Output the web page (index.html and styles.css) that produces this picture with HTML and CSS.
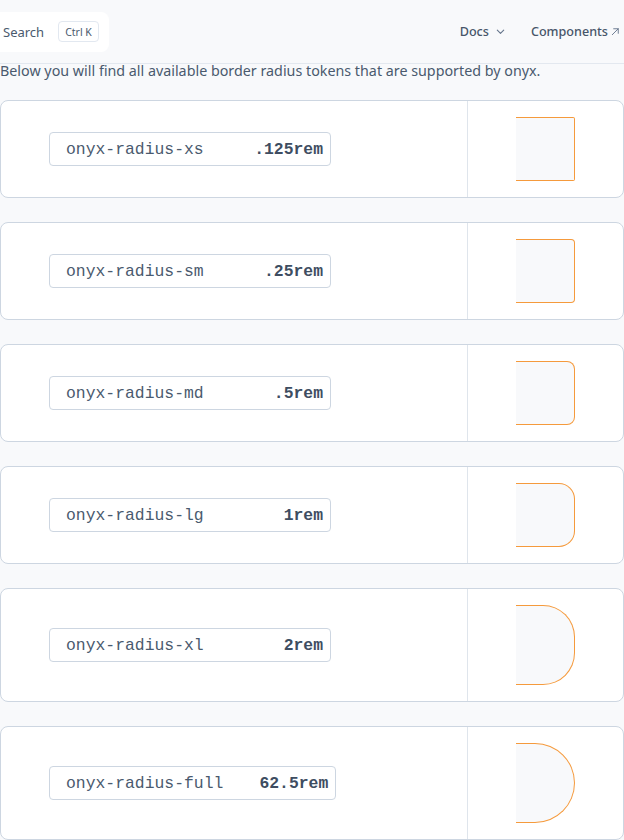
FILE: index.html
```html
<!DOCTYPE html>
<html lang="en">
<head>
<meta charset="utf-8">
<title>Border radius tokens</title>
<link rel="stylesheet" href="styles.css">
</head>
<body>
<header class="topbar">
  <div class="search">
    <span class="search-label">Search</span>
    <kbd class="kbd">Ctrl K</kbd>
  </div>
  <nav class="nav">
    <span class="nav-item nav-docs">Docs
      <svg class="nav-icon" viewBox="0 0 12 12" width="11" height="11"><path d="M2.5 4.5 6 8l3.5-3.5" fill="none" stroke="currentColor" stroke-width="1.2" stroke-linecap="round" stroke-linejoin="round"/></svg>
    </span>
    <span class="nav-item nav-ext">Components
      <svg class="nav-icon" viewBox="0 0 12 12" width="11" height="11"><path d="M2.5 9.5 9 3M4 3H9v5" fill="none" stroke="currentColor" stroke-width="1" stroke-linecap="round" stroke-linejoin="round"/></svg>
    </span>
  </nav>
</header>

<p class="intro">Below you will find all available border radius tokens that are supported by onyx.</p>

<main class="list">
  <section class="card">
    <div class="card-main"><div class="token"><span class="token-name">onyx-radius-xs</span><span class="token-value">.125rem</span></div></div>
    <div class="card-preview"><div class="shape r-xs"></div></div>
  </section>
  <section class="card">
    <div class="card-main"><div class="token"><span class="token-name">onyx-radius-sm</span><span class="token-value">.25rem</span></div></div>
    <div class="card-preview"><div class="shape r-sm"></div></div>
  </section>
  <section class="card">
    <div class="card-main"><div class="token"><span class="token-name">onyx-radius-md</span><span class="token-value">.5rem</span></div></div>
    <div class="card-preview"><div class="shape r-md"></div></div>
  </section>
  <section class="card">
    <div class="card-main"><div class="token"><span class="token-name">onyx-radius-lg</span><span class="token-value">1rem</span></div></div>
    <div class="card-preview"><div class="shape r-lg"></div></div>
  </section>
  <section class="card">
    <div class="card-main"><div class="token"><span class="token-name">onyx-radius-xl</span><span class="token-value">2rem</span></div></div>
    <div class="card-preview"><div class="shape shape-tall r-xl"></div></div>
  </section>
  <section class="card">
    <div class="card-main"><div class="token"><span class="token-name">onyx-radius-full</span><span class="token-value">62.5rem</span></div></div>
    <div class="card-preview"><div class="shape shape-tall r-full"></div></div>
  </section>
</main>
</body>
</html>
```

FILE: styles.css
```css
html, body {
  margin: 0;
  padding: 0;
}

body {
  background: #f8f9fb;
  font-family: "Noto Sans", "Open Sans", sans-serif;
  color: #475569;
  width: 624px;
  overflow: hidden;
}

.topbar {
  height: 64px;
  box-sizing: border-box;
  border-bottom: 1px solid #e3e8ef;
  display: flex;
  align-items: center;
  justify-content: space-between;
}

.search {
  background: #ffffff;
  height: 40px;
  width: 109px;
  box-sizing: border-box;
  border-radius: 0 8px 8px 0;
  display: flex;
  align-items: center;
  padding-left: 3px;
  gap: 14px;
}

.search-label {
  font-size: 13px;
  color: #4a5a6e;
}

.kbd {
  font-family: "Noto Sans", sans-serif;
  font-size: 10.5px;
  color: #4a5a6e;
  border: 1px solid #e2e8f0;
  border-radius: 4px;
  height: 21px;
  box-sizing: border-box;
  padding: 0 6px;
  display: flex;
  align-items: center;
}

.nav {
  display: flex;
  align-items: center;
  gap: 25px;
  padding-right: 3px;
  margin-top: -1px;
}

.nav-item {
  font-size: 12.6px;
  font-weight: 500;
  color: #475569;
  display: flex;
  align-items: center;
}

.nav-docs {
  gap: 6px;
}

.nav-ext {
  gap: 2px;
}

.nav-icon {
  color: #64748b;
}

.intro {
  margin: 0;
  font-size: 14.3px;
  line-height: 13px;
  color: #4a5a6e;
  height: 36px;
  white-space: nowrap;
}

.list {
  display: flex;
  flex-direction: column;
  gap: 24px;
}

.card {
  display: grid;
  grid-template-columns: 1fr 155px;
  background: #ffffff;
  border: 1px solid #cdd6e1;
  border-radius: 8px;
}

.card-main {
  display: flex;
  align-items: center;
  padding: 0 0 0 48px;
  border-right: 1px solid #dfe5ec;
}

.token {
  display: flex;
  justify-content: space-between;
  align-items: center;
  gap: 36px;
  min-width: 282px;
  box-sizing: border-box;
  height: 34px;
  padding: 0 7px 0 16px;
  border: 1px solid #cdd6e1;
  border-radius: 4px;
  font-family: "Liberation Mono", "DejaVu Sans Mono", monospace;
  font-size: 16.4px;
}

.token-name {
  color: #4a5a6e;
}

.token-value {
  font-weight: 700;
  color: #3e4d61;
}

.card-preview {
  display: flex;
  align-items: center;
  justify-content: center;
  padding: 16px 0;
}

.shape {
  width: 59px;
  height: 64px;
  box-sizing: border-box;
  background: #f8f9fb;
  border: 1px solid #f59a3c;
  border-left: none;
}

.shape-tall {
  height: 80px;
}

.r-xs { border-radius: 0 2px 2px 0; }
.r-sm { border-radius: 0 4px 4px 0; }
.r-md { border-radius: 0 8px 8px 0; }
.r-lg { border-radius: 0 16px 16px 0; }
.r-xl { border-radius: 0 32px 32px 0; }
.r-full { border-radius: 0 1000px 1000px 0; }
```
